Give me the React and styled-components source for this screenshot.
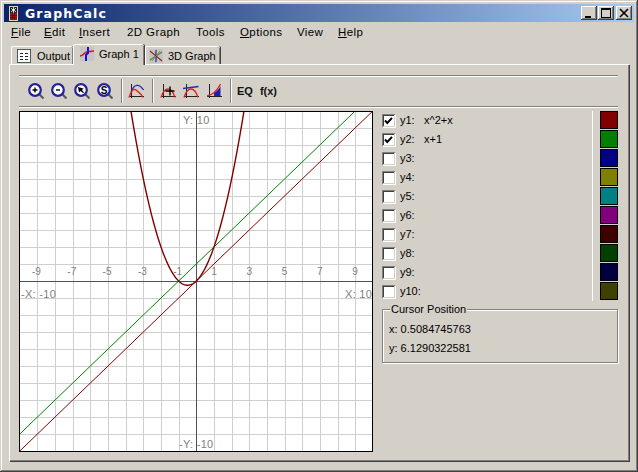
import React from "react";
import styled, { createGlobalStyle } from "styled-components";

const Global = createGlobalStyle`
  html, body { margin: 0; padding: 0; background: #d4d0c8; }
  * { box-sizing: border-box; }
`;
const Window = styled.div`
  width: 638px; height: 472px; padding: 4px; background: #d4d0c8; overflow: hidden;
  display: flex; flex-direction: column;
  font-family: "Liberation Sans", Arial, sans-serif; font-size: 11px; color: #000;
  box-shadow: inset -1px -1px #404040, inset 1px 1px #d4d0c8, inset -2px -2px #808080, inset 2px 2px #fff;
`;
const TitleBar = styled.div`
  height: 18px; flex: none; display: flex; align-items: center; padding: 0 2px 0 5px;
  background: linear-gradient(90deg, #0a246a, #a6caf0);
`;
const TitleText = styled.span`
  margin-left: 7px; flex: 1; color: #fff; font: bold 12.5px "DejaVu Sans", sans-serif; letter-spacing: 1.1px;
`;
const WinButton = styled.div`
  width: 16px; height: 14px; margin-left: ${p => p.$gap}px; background: #d4d0c8; display: flex;
  box-shadow: inset -1px -1px #404040, inset 1px 1px #fff, inset -2px -2px #808080;
`;
const MenuBar = styled.div`
  height: 19px; flex: none; display: flex; align-items: center; padding-left: 7px;
`;
const MenuItem = styled.span`
  width: ${p => p.$w}px; font-size: 11.5px; letter-spacing: .4px; white-space: nowrap;
  u { text-underline-offset: 1px; }
`;
const Tabs = styled.div`
  height: 23px; flex: none; display: flex; align-items: flex-end; padding-left: 7px;
`;
const Tab = styled.div`
  position: relative; z-index: ${p => p.$active ? 2 : 1};
  width: ${p => p.$w}px; height: ${p => p.$active ? 21 : 18}px;
  margin-bottom: ${p => p.$active ? -1 : 0}px; margin-right: ${p => p.$mr || 0}px;
  display: flex; align-items: center; gap: ${p => p.$gap}px;
  padding: 0 0 ${p => p.$active ? 3 : 0}px ${p => p.$pad}px;
  background: #d4d0c8; white-space: nowrap;
  border-top: 1px solid #fff; border-left: 1px solid #fff; border-radius: 2px 2px 0 0;
  box-shadow: inset -1px 0 #808080, 1px 0 #404040;
`;
const Pane = styled.div`
  width: 620px; height: 397px; margin-left: 5px; flex: none; padding: 10px 10px 0 9px;
  border-top: 1px solid #fff; border-left: 1px solid #fff;
  box-shadow: inset -1px -1px #808080, 1px 1px #404040;
`;
const Toolbar = styled.div`
  height: 32px; width: 599px; display: flex; align-items: center; padding-left: 9px;
  border-top: 1px solid #808080; border-bottom: 1px solid #808080;
  box-shadow: 0 1px #fff, inset 0 1px #fff;
`;
const ToolIcon = styled.svg`
  width: 16px; height: 16px; flex: none; margin-right: ${p => p.$mr ?? 7}px;
`;
const Sep = styled.div`
  width: 2px; height: 24px; flex: none; margin: 0 ${p => p.$r ?? 7}px 0 ${p => p.$l ?? 1}px;
  background: linear-gradient(90deg, #808080 50%, #fff 50%);
`;
const ToolText = styled.span`
  font-weight: bold; font-size: 11px; margin-right: ${p => p.$mr || 0}px; color: #111;
`;
const Body = styled.div`
  display: flex; margin-top: 4px; width: 599px;
`;
const GraphBox = styled.div`
  width: 354px; height: 341px; flex: none; background: #fff; border: 1px solid #000;
  svg { display: block; }
`;
const Side = styled.div`
  margin-left: 9px; width: 236px; display: flex; flex-direction: column;
`;
const FunctionPanel = styled.div`
  display: flex; height: 190px;
`;
const Rows = styled.div`
  flex: 1; border-right: 1px solid #fff; margin-right: 7px;
`;
const Row = styled.div`
  height: 19px; display: flex; align-items: center;
`;
const Check = styled.div`
  width: 13px; height: 13px; flex: none; background: #fff; display: flex;
  box-shadow: inset 1px 1px #808080, inset -1px -1px #d4d0c8, inset 2px 2px #404040, 1px 1px #fff;
`;
const Name = styled.span`
  margin-left: 5px; width: 24px; flex: none; margin-top: -1px;
`;
const Expr = styled.span`
  margin-top: -1px;
`;
const Swatches = styled.div`
  width: 18px; flex: none; display: flex; flex-direction: column; gap: 1px;
`;
const Swatch = styled.div`
  width: 18px; height: 18px; background: ${p => p.$c}; border: 1px solid #000;
`;
const Group = styled.div`
  position: relative; margin-top: 8px; height: 54px; width: 236px; padding: 9px 6px 0;
  border: 1px solid #808080; box-shadow: 1px 1px #fff, inset 1px 1px #fff;
`;
const Legend = styled.span`
  position: absolute; top: -7px; left: 7px; padding: 0 1px; background: #d4d0c8;
`;
const Readout = styled.div`
  height: 19px; display: flex; align-items: center;
`;

const W = 352, H = 339;
const X = x => 176.3 + 17.65 * x;
const Y = y => 169 - 17 * y;
const pts = (f, a, b, n = 240) => Array.from({ length: n + 1 }, (_, i) => {
  const x = a + (b - a) * i / n;
  return `${X(x).toFixed(2)},${Y(f(x)).toFixed(2)}`;
}).join(" ");

const ticks = [-9, -7, -5, -3, -1, 1, 3, 5, 7, 9];
const grid = Array.from({ length: 19 }, (_, i) => i - 9).filter(n => n !== 0);

const Plot = () => (
  <svg width={W} height={H} viewBox={`0 0 ${W} ${H}`} fontFamily='"Liberation Sans", sans-serif'>
    <g stroke="#cfcfcf" strokeWidth="1" shapeRendering="crispEdges">
      {grid.map(n => <line key={"v" + n} x1={Math.round(X(n)) + .5} x2={Math.round(X(n)) + .5} y1="0" y2={H} />)}
      {grid.map(n => <line key={"h" + n} x1="0" x2={W} y1={Y(n) + .5} y2={Y(n) + .5} />)}
    </g>
    <g stroke="#505050" strokeWidth="1" shapeRendering="crispEdges">
      <line x1="176.5" x2="176.5" y1="0" y2={H} />
      <line x1="0" x2={W} y1="169.5" y2="169.5" />
    </g>
    <g fill="#808080" fontSize="10" textAnchor="middle">
      {ticks.map(t => <text key={t} x={X(t) - (t < 0 ? 1 : 0)} y="163">{t}</text>)}
    </g>
    <g fill="#808080" fontSize="11" letterSpacing=".3">
      <text x="163" y="12">Y: 10</text>
      <text x="159" y="336">-Y: -10</text>
      <text x="1" y="186">-X: -10</text>
      <text x="325" y="186">X: 10</text>
    </g>
    <polyline points={pts(x => x + 1, -10, 9, 1)} fill="none" stroke="#008000" strokeWidth="1" />
    <polyline points={pts(x => x, -10, 10, 1)} fill="none" stroke="#800000" strokeWidth="1" />
    <polyline points={pts(x => x * x + x, -3.72, 2.72)} fill="none" stroke="#800000" strokeWidth="1.4" />
  </svg>
);

const Lens = ({ children, mr }) => (
  <ToolIcon viewBox="0 0 16 16" $mr={mr}>
    <line x1="10.5" y1="10.5" x2="15.5" y2="15.5" stroke="#555" strokeWidth="2" />
    <circle cx="7" cy="7" r="5.8" fill="#fff" stroke="#22229c" strokeWidth="2.2" />
    {children}
  </ToolIcon>
);
const Axes = () => <path d="M3.5 1V14.5M0.5 13.5H15.5" stroke="#222" strokeWidth="1" fill="none" shapeRendering="crispEdges" />;
const Hump = ({ d = "M1 14.5C3 8 5.5 6 8 6S13 8 15 14.5" }) => <path d={d} stroke="#e02020" strokeWidth="1.3" fill="none" />;

const SmallButtonGlyph = ({ d, w = 1.6 }) => (
  <svg width="16" height="14" viewBox="0 0 16 14"><path d={d} stroke="#000" strokeWidth={w} fill="none" shapeRendering="crispEdges" /></svg>
);

const funcs = [
  ["y1:", "x^2+x", true, "#800000"], ["y2:", "x+1", true, "#008000"], ["y3:", "", false, "#000080"],
  ["y4:", "", false, "#808000"], ["y5:", "", false, "#008080"], ["y6:", "", false, "#800080"],
  ["y7:", "", false, "#400000"], ["y8:", "", false, "#004000"], ["y9:", "", false, "#000040"],
  ["y10:", "", false, "#404000"],
];
const menu = [["F", "ile", 33], ["E", "dit", 35], ["I", "nsert", 48], ["", "2D Graph", 69], ["", "Tools", 44], ["O", "ptions", 57], ["", "View", 41], ["H", "elp", 40]];

export default function App() {
  return (
    <Window>
      <Global />
      <TitleBar>
        <svg width="9" height="15" viewBox="0 0 9 15" shapeRendering="crispEdges">
          <rect width="9" height="15" fill="#d8d4cc" />
          <rect x="1" y="1" width="7" height="13" fill="#202020" />
          <path d="M4.5 1V7M2 2L7 6M7 2L2 6" stroke="#fff" strokeWidth=".8" />
          <rect x="1" y="7" width="7" height="7" fill="#a01818" />
          <path d="M1 9.5H8M1 11.5H8M3.5 7V14M5.5 7V14" stroke="#301010" strokeWidth=".6" />
        </svg>
        <TitleText>GraphCalc</TitleText>
        <WinButton><SmallButtonGlyph d="M4 10.5H10" w={2} /></WinButton>
        <WinButton $gap={1}><SmallButtonGlyph d="M3.5 2.5H12.5V11.5H3.5ZM3.5 3.5H12.5" w={1} /></WinButton>
        <WinButton $gap={2}><svg width="16" height="14" viewBox="0 0 16 14"><path d="M4 3L12 11M12 3L4 11" stroke="#000" strokeWidth="1.6" fill="none" /></svg></WinButton>
      </TitleBar>
      <MenuBar>
        {menu.map(([u, r, w]) => <MenuItem key={r} $w={w}>{u && <u>{u}</u>}{r}</MenuItem>)}
      </MenuBar>
      <Tabs>
        <Tab $w={62} $pad={5} $gap={6}>
          <svg width="14" height="14" viewBox="0 0 14 14" shapeRendering="crispEdges">
            <rect x=".5" y=".5" width="13" height="13" fill="#fff" stroke="#555" />
            <path d="M3 4H6M8 4H11M3 7H6M8 7H11M3 10H6" stroke="#222" />
            <path d="M8 10H11" stroke="#a00000" />
          </svg>
          Output
        </Tab>
        <Tab $active $w={71} $pad={6} $gap={5} $mr={1}>
          <svg width="14" height="14" viewBox="0 0 14 14">
            <rect width="14" height="14" fill="#c4c4c4" />
            <path d="M0 9C4 9 4 5 7 5S10 4 14 4" stroke="#e01010" strokeWidth="1.6" fill="none" />
            <path d="M8 0V6L6 8V14" stroke="#1010e0" strokeWidth="2" fill="none" />
          </svg>
          Graph 1
        </Tab>
        <Tab $w={75} $pad={3} $gap={5}>
          <svg width="14" height="14" viewBox="0 0 14 14">
            <rect width="14" height="14" fill="#c4c4c4" />
            <path d="M1 2L13 12" stroke="#a02020" strokeWidth="1.2" />
            <path d="M13 3L1 11" stroke="#2a8a2a" strokeWidth="1.2" />
            <path d="M7 1V13" stroke="#2020c0" strokeWidth="1.2" />
            <path d="M3 12L11 2" stroke="#a09020" strokeWidth="1" />
          </svg>
          3D Graph
        </Tab>
      </Tabs>
      <Pane>
        <Toolbar>
          <Lens><path d="M4.5 7H9.5M7 4.5V9.5" stroke="#000" strokeWidth="1.4" /></Lens>
          <Lens><path d="M5 7H9" stroke="#000" strokeWidth="1.4" /></Lens>
          <Lens><path d="M4 4L9.5 5.5L8 7L10 9.5L9 10L6.5 8L5 9.5Z" fill="#000" /></Lens>
          <Lens><text x="7" y="10.5" textAnchor="middle" fontSize="10" fontWeight="bold" fontFamily='"Liberation Sans", sans-serif'>S</text></Lens>
          <Sep $r={5} />
          <ToolIcon viewBox="0 0 16 16">
            <Axes />
            <path d="M3 9C6 1 11 0 15.5 7" stroke="#2a2ab0" strokeWidth="1.3" fill="none" />
            <Hump d="M1 14.5C3 8 6 5 8 7S13 10 15 14.5" />
          </ToolIcon>
          <Sep $r={6} />
          <ToolIcon viewBox="0 0 16 16">
            <Axes />
            <Hump />
            <path d="M10 3.5V12.5M5.5 8H14.5" stroke="#000" strokeWidth="1.4" />
          </ToolIcon>
          <ToolIcon viewBox="0 0 16 16">
            <Axes />
            <path d="M0 5.5L15.5 3.5" stroke="#2a2ab0" strokeWidth="1.3" />
            <Hump />
          </ToolIcon>
          <ToolIcon viewBox="0 0 16 16">
            <path d="M8 13V9.5C11 8.5 13 6 14.5 3V13Z" fill="#2020b0" />
            <Axes />
            <path d="M1 13C6 12 11 8 14.5 1" stroke="#e02020" strokeWidth="1.3" fill="none" />
          </ToolIcon>
          <Sep $r={5} />
          <ToolText $mr={7}>EQ</ToolText>
          <ToolText>f(x)</ToolText>
        </Toolbar>
        <Body>
          <GraphBox><Plot /></GraphBox>
          <Side>
            <FunctionPanel>
              <Rows>
                {funcs.map(([n, e, c]) => (
                  <Row key={n}>
                    <Check>
                      {c && <svg width="13" height="13" viewBox="0 0 13 13"><path d="M3 6.5L5.3 9L10 3.8" stroke="#000" strokeWidth="2" fill="none" /></svg>}
                    </Check>
                    <Name>{n}</Name>
                    <Expr>{e}</Expr>
                  </Row>
                ))}
              </Rows>
              <Swatches>{funcs.map(f => <Swatch key={f[0]} $c={f[3]} />)}</Swatches>
            </FunctionPanel>
            <Group>
              <Legend>Cursor Position</Legend>
              <Readout>x: 0.5084745763</Readout>
              <Readout>y: 6.1290322581</Readout>
            </Group>
          </Side>
        </Body>
      </Pane>
    </Window>
  );
}
